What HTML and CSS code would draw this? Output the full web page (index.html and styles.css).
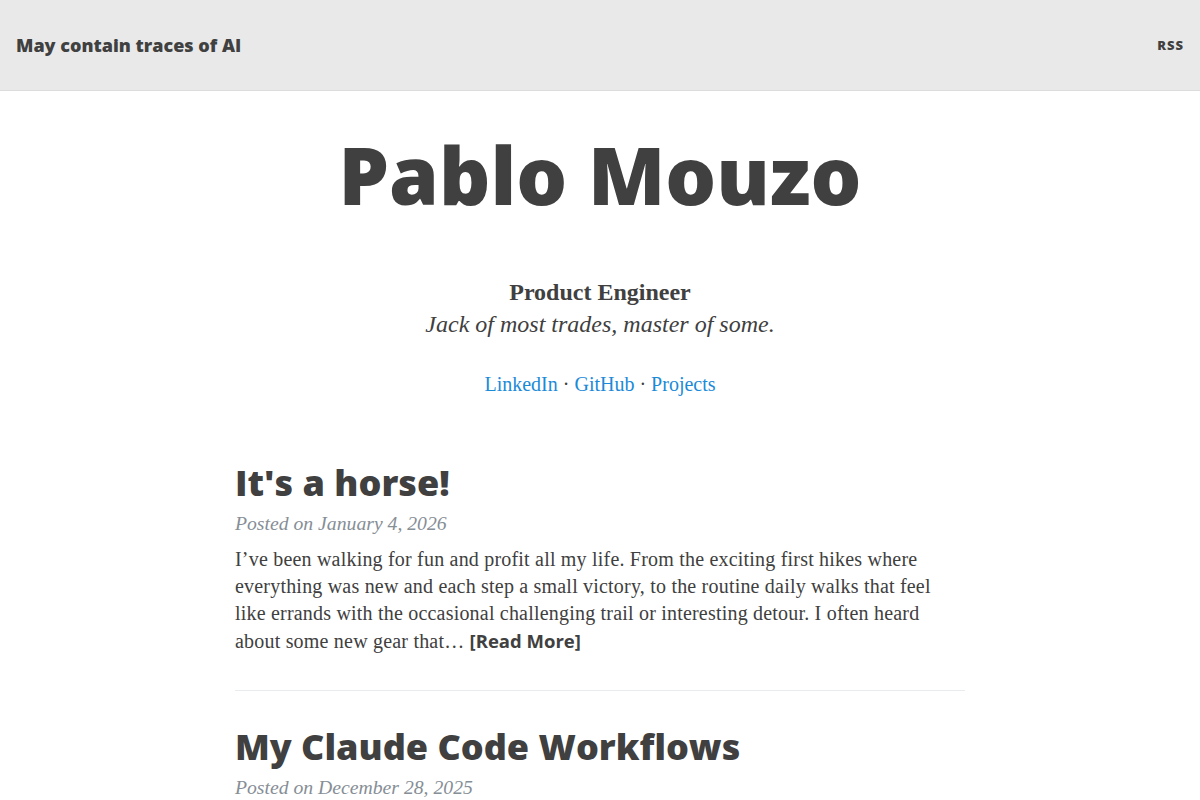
FILE: index.html
```
<!DOCTYPE html>
<html lang="en">
<head>
    <meta charset="UTF-8">
    <meta name="viewport" content="width=device-width, initial-scale=1.0">
    <title>May contain traces of AI</title>
    <link rel="stylesheet" href="styles.css">
</head>
<body>

    <nav class="navbar">
        <a class="brand" href="#">May contain traces of AI</a>
        <a class="nav-link" href="#">RSS</a>
    </nav>

    <header class="site-heading">
        <h1>Pablo Mouzo</h1>
        <div class="role">Product Engineer</div>
        <div class="tagline">Jack of most trades, master of some.</div>
        <div class="social">
            <a href="#">LinkedIn</a> · <a href="#">GitHub</a> · <a href="#">Projects</a>
        </div>
    </header>

    <main class="container">

        <article class="post-preview">
            <h2 class="post-title">It's a horse!</h2>
            <p class="post-meta">Posted on January 4, 2026</p>
            <p class="post-excerpt">I’ve been walking for fun and profit all my life. From the exciting first hikes where everything was new and each step a small victory, to the routine daily walks that feel like errands with the occasional challenging trail or interesting detour. I often heard about some new gear that… <a class="read-more" href="#">[Read More]</a></p>
        </article>

        <hr>

        <article class="post-preview">
            <h2 class="post-title">My Claude Code Workflows</h2>
            <p class="post-meta">Posted on December 28, 2025</p>
            <p class="post-excerpt">A few notes on how I actually use Claude Code day to day: planning first, small diffs, and letting the tests do the talking.</p>
        </article>

    </main>

</body>
</html>
```

FILE: styles.css
```
body {
    margin: 0;
    background-color: #fff;
    color: #404040;
    font-family: 'Liberation Serif', 'Times New Roman', serif;
    font-size: 20px;
}

a {
    text-decoration: none;
}

.navbar {
    height: 91px;
    box-sizing: border-box;
    display: flex;
    align-items: center;
    justify-content: space-between;
    padding: 0 16px;
    background-color: #e9e9e9;
    border-bottom: 1px solid #dcdcdc;
}

.brand {
    font-family: 'Open Sans', Helvetica, sans-serif;
    font-weight: 800;
    font-size: 18px;
    color: #404040;
}

.nav-link {
    font-family: 'Open Sans', Helvetica, sans-serif;
    font-weight: 800;
    font-size: 13px;
    letter-spacing: 1px;
    color: #404040;
}

.site-heading {
    display: flex;
    flex-direction: column;
    align-items: center;
    text-align: center;
}

.site-heading h1 {
    margin: 39px 0 0;
    font-family: 'Open Sans', Helvetica, sans-serif;
    font-weight: 800;
    font-size: 80px;
    line-height: 88px;
}

.role {
    margin-top: 58px;
    font-weight: 700;
    font-size: 24px;
    line-height: 32px;
}

.tagline {
    font-style: italic;
    font-size: 24px;
    line-height: 32px;
}

.social {
    margin-top: 31px;
    line-height: 27px;
    color: #404040;
}

.social a {
    color: #1b8ad8;
}

.container {
    width: 730px;
    margin: 63px auto 0;
}

.post-title {
    margin: 0;
    font-family: 'Open Sans', Helvetica, sans-serif;
    font-weight: 800;
    font-size: 36px;
    line-height: 43px;
}

.post-meta {
    margin: 6px 0 0;
    font-style: italic;
    font-size: 19.7px;
    color: #868e96;
    line-height: 27px;
}

.post-excerpt {
    margin: 9px 0 0;
    line-height: 27px;
    letter-spacing: 0.2px;
}

.read-more {
    font-family: 'Open Sans', Helvetica, sans-serif;
    font-weight: 700;
    font-size: 18.5px;
    letter-spacing: 0;
    color: #404040;
}

hr {
    margin: 35px 0 34px;
    border: 0;
    border-top: 1px solid #e9ecef;
}
```
